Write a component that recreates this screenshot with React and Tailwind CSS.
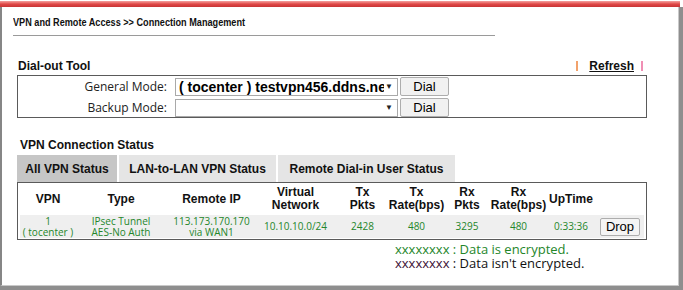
import React from 'react';

const arial = "font-['Liberation_Sans',Arial,sans-serif]";
const soft = "font-['Open_Sans','Noto_Sans',sans-serif]";

const cols = 'grid grid-cols-[56px_90px_91px_77px_57px_51px_50px_53px_52px_46px]';

const headers = [
  ['VPN'],
  ['Type'],
  ['Remote IP'],
  ['Virtual', 'Network'],
  ['Tx', 'Pkts'],
  ['Tx', 'Rate(bps)'],
  ['Rx', 'Pkts'],
  ['Rx', 'Rate(bps)'],
  ['UpTime'],
  [],
];

const row = [
  ['1', '( tocenter )'],
  ['IPsec Tunnel', 'AES-No Auth'],
  ['113.173.170.170', 'via WAN1'],
  ['10.10.10.0/24'],
  ['2428'],
  ['480'],
  ['3295'],
  ['480'],
  ['0:33:36'],
];

function Cell({ lines, className = '' }) {
  return (
    <div className={`flex flex-col items-center justify-center whitespace-nowrap ${className}`}>
      {lines.map((l) => (
        <span key={l}>{l}</span>
      ))}
    </div>
  );
}

function Btn({ children, className = '' }) {
  return (
    <button
      className={`flex items-center justify-center rounded-[2px] border border-[#adadad] bg-[#f1f1f1] text-[13px] text-black ${arial} ${className}`}
    >
      {children}
    </button>
  );
}

function ModeRow({ label, value }) {
  return (
    <div className="flex items-center h-[19px]">
      <div className={`w-[149px] text-right text-[12px] text-[#222] ${soft}`}>{label}</div>
      <div className="ml-[8px] flex items-center w-[223px] h-[18px] border border-[#a9a9a9] bg-white pl-[3px] pr-[4px]">
        <span className={`flex-1 overflow-hidden whitespace-nowrap text-[14px] leading-[16px] font-bold text-black ${arial}`}>{value}</span>
        <span className="ml-[1px] text-[8px] leading-none text-[#222]">▼</span>
      </div>
      <Btn className="ml-[2px] w-[49px] h-[19px]">Dial</Btn>
    </div>
  );
}

export default function App() {
  return (
    <div className={`w-[683px] h-[290px] bg-white overflow-hidden ${arial}`}>
      {/* red top bar */}
      <div className="mt-[1px] h-[6px] w-[680px] bg-gradient-to-b from-[#f3a0a0] via-[#e04848] to-[#c93434]" />

      {/* frame with shadowed right/bottom edge */}
      <div className="w-[683px] h-[283px] bg-[#8e8e8e] pr-[4px] pb-[4px]">
        <div className="h-full bg-white border-l-2 border-l-[#868686] border-r border-b border-r-[#c9c9c9] border-b-[#c9c9c9]">
          <div className="pl-[11px] pt-[8px]">
            <div className="origin-left scale-x-[0.83] whitespace-nowrap text-[11px] leading-[14px] font-bold text-[#111]">
              VPN and Remote Access &gt;&gt; Connection Management
            </div>
            <div className="mt-[6px] w-[482px] h-[1px] bg-[#9a9a9a]" />
          </div>

          <div className="pl-[15px] w-[644px]">
            {/* dial-out tool */}
            <div className="mt-[23px] flex items-center h-[14px] pl-[1px] text-[12px] font-bold">
              <span className="text-[#111]">Dial-out Tool</span>
              <div className="ml-auto mr-[3px] flex items-center">
                <div className="w-[2px] h-[10px] bg-[#f2a26c]" />
                <a className="ml-[11px] underline text-[#111]">Refresh</a>
                <div className="ml-[7px] w-[2px] h-[10px] bg-[#f08fb4]" />
              </div>
            </div>
            <div className="mt-[2px] w-[630px] border border-[#5a5a5a] pt-[1px] flex flex-col gap-[2px]">
              <ModeRow label="General Mode:" value="( tocenter ) testvpn456.ddns.net" />
              <ModeRow label="Backup Mode:" value="" />
            </div>

            {/* vpn connection status */}
            <div className="mt-[20px] pl-[3px] h-[14px] leading-[14px] text-[12px] font-bold text-[#111]">
              VPN Connection Status
            </div>
            <div className="mt-[3px] flex gap-[2px] h-[27px] text-[12px] font-bold text-[#111]">
              <div className="w-[100px] flex items-center justify-center bg-[#c6c6c6]">All VPN Status</div>
              <div className="w-[157px] flex items-center justify-center bg-[#e5e5e5]">LAN-to-LAN VPN Status</div>
              <div className="w-[177px] flex items-center justify-center bg-[#e5e5e5]">Remote Dial-in User Status</div>
            </div>
            <div className="w-[630px] border border-[#5a5a5a] px-[2px] pb-[1px]">
              <div className={`${cols} h-[32px] text-[12px] leading-[13px] font-bold text-[#111]`}>
                {headers.map((h, i) => (
                  <Cell key={i} lines={h} />
                ))}
              </div>
              <div className={`${cols} h-[23px] bg-[#efefef] text-[10px] leading-[11px] text-[#24862a] ${soft}`}>
                {row.map((r, i) => (
                  <Cell key={i} lines={r} />
                ))}
                <div className="flex items-center justify-center">
                  <Btn className="w-[40px] h-[18px] bg-[#f4f4f4]">Drop</Btn>
                </div>
              </div>
            </div>
            <div className={`ml-[378px] mt-[2px] text-[13px] leading-[14px] ${soft}`}>
              <div className="text-[#24862a]">xxxxxxxx : Data is encrypted.</div>
              <div className="text-[#111]">
                <span className="text-[#3b1035]">xxxxxxxx</span> : Data isn't encrypted.
              </div>
            </div>
          </div>
        </div>
      </div>
    </div>
  );
}
